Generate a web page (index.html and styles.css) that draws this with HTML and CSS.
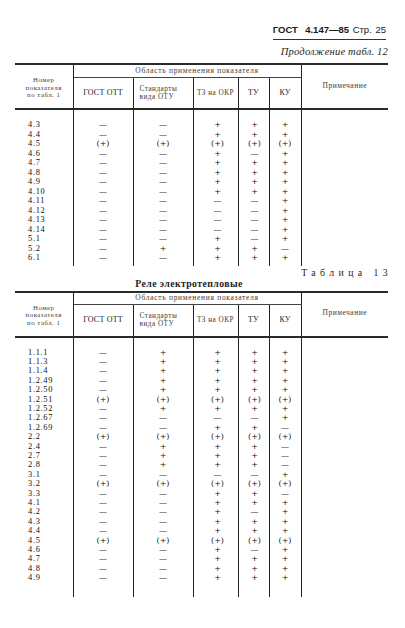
FILE: index.html
```html
<!DOCTYPE html>
<html lang="ru">
<head>
<meta charset="utf-8">
<title>ГОСТ 4.147—85 Стр. 25</title>
<link rel="stylesheet" href="styles.css">
</head>
<body>
<div class="page">
  <div class="running-head"><span class="rh-box"><b>ГОСТ</b>&nbsp; <b>4.147—85</b> Стр. 25</span></div>
  <div class="caption-italic">Продолжение табл. 12</div>

  <table class="gost-table t12">
    <colgroup><col class="c1"><col class="c2"><col class="c3"><col class="c4"><col class="c5"><col class="c6"><col class="c7"></colgroup>
    <thead>
      <tr class="h1">
        <th rowspan="2" class="num-h">Номер<br>показателя<br>по табл. 1</th>
        <th colspan="5" class="group-h">Область применения показателя</th>
        <th rowspan="2" class="note-h">Примечание</th>
      </tr>
      <tr class="h2">
        <th class="caps">ГОСТ ОТТ</th>
        <th class="left">Стандарты<br>вида ОТУ</th>
        <th>ТЗ на ОКР</th>
        <th class="caps">ТУ</th>
        <th class="caps">КУ</th>
      </tr>
    </thead>
    <tbody>
      <tr class="pad-top"><td></td><td></td><td></td><td></td><td></td><td></td><td></td></tr>
      <tr><td>4.3</td><td>—</td><td>—</td><td>+</td><td>+</td><td>+</td><td></td></tr>
      <tr><td>4.4</td><td>—</td><td>—</td><td>+</td><td>+</td><td>+</td><td></td></tr>
      <tr><td>4.5</td><td>(+)</td><td>(+)</td><td>(+)</td><td>(+)</td><td>(+)</td><td></td></tr>
      <tr><td>4.6</td><td>—</td><td>—</td><td>+</td><td>—</td><td>+</td><td></td></tr>
      <tr><td>4.7</td><td>—</td><td>—</td><td>+</td><td>+</td><td>+</td><td></td></tr>
      <tr><td>4.8</td><td>—</td><td>—</td><td>+</td><td>+</td><td>+</td><td></td></tr>
      <tr><td>4.9</td><td>—</td><td>—</td><td>+</td><td>+</td><td>+</td><td></td></tr>
      <tr><td>4.10</td><td>—</td><td>—</td><td>+</td><td>+</td><td>+</td><td></td></tr>
      <tr><td>4.11</td><td>—</td><td>—</td><td>—</td><td>—</td><td>+</td><td></td></tr>
      <tr><td>4.12</td><td>—</td><td>—</td><td>—</td><td>—</td><td>+</td><td></td></tr>
      <tr><td>4.13</td><td>—</td><td>—</td><td>—</td><td>—</td><td>+</td><td></td></tr>
      <tr><td>4.14</td><td>—</td><td>—</td><td>—</td><td>—</td><td>+</td><td></td></tr>
      <tr><td>5.1</td><td>—</td><td>—</td><td>+</td><td>—</td><td>+</td><td></td></tr>
      <tr><td>5.2</td><td>—</td><td>+</td><td>+</td><td>+</td><td>—</td><td></td></tr>
      <tr><td>6.1</td><td>—</td><td>—</td><td>+</td><td>+</td><td>+</td><td></td></tr>
      <tr class="pad-bottom"><td></td><td></td><td></td><td></td><td></td><td></td><td></td></tr>
    </tbody>
  </table>

  <div class="table-label">Таблица 13</div>
  <div class="table-title">Реле электротепловые</div>

  <table class="gost-table t13">
    <colgroup><col class="c1"><col class="c2"><col class="c3"><col class="c4"><col class="c5"><col class="c6"><col class="c7"></colgroup>
    <thead>
      <tr class="h1">
        <th rowspan="2" class="num-h">Номер<br>показателя<br>по табл. 1</th>
        <th colspan="5" class="group-h">Область применения показателя</th>
        <th rowspan="2" class="note-h">Примечание</th>
      </tr>
      <tr class="h2">
        <th class="caps">ГОСТ ОТТ</th>
        <th class="left">Стандарты<br>вида ОТУ</th>
        <th>ТЗ на ОКР</th>
        <th class="caps">ТУ</th>
        <th class="caps">КУ</th>
      </tr>
    </thead>
    <tbody>
      <tr class="pad-top"><td></td><td></td><td></td><td></td><td></td><td></td><td></td></tr>
      <tr><td>1.1.1</td><td>—</td><td>+</td><td>+</td><td>+</td><td>+</td><td></td></tr>
      <tr><td>1.1.3</td><td>—</td><td>+</td><td>+</td><td>+</td><td>+</td><td></td></tr>
      <tr><td>1.1.4</td><td>—</td><td>+</td><td>+</td><td>+</td><td>+</td><td></td></tr>
      <tr><td>1.2.49</td><td>—</td><td>+</td><td>+</td><td>+</td><td>+</td><td></td></tr>
      <tr><td>1.2.50</td><td>—</td><td>+</td><td>+</td><td>+</td><td>+</td><td></td></tr>
      <tr><td>1.2.51</td><td>(+)</td><td>(+)</td><td>(+)</td><td>(+)</td><td>(+)</td><td></td></tr>
      <tr><td>1.2.52</td><td>—</td><td>+</td><td>+</td><td>+</td><td>+</td><td></td></tr>
      <tr><td>1.2.67</td><td>—</td><td>—</td><td>—</td><td>—</td><td>+</td><td></td></tr>
      <tr><td>1.2.69</td><td>—</td><td>—</td><td>+</td><td>+</td><td>—</td><td></td></tr>
      <tr><td>2.2</td><td>(+)</td><td>(+)</td><td>(+)</td><td>(+)</td><td>(+)</td><td></td></tr>
      <tr><td>2.4</td><td>—</td><td>+</td><td>+</td><td>+</td><td>—</td><td></td></tr>
      <tr><td>2.7</td><td>—</td><td>+</td><td>+</td><td>+</td><td>—</td><td></td></tr>
      <tr><td>2.8</td><td>—</td><td>+</td><td>+</td><td>+</td><td>—</td><td></td></tr>
      <tr><td>3.1</td><td>—</td><td>—</td><td>—</td><td>—</td><td>+</td><td></td></tr>
      <tr><td>3.2</td><td>(+)</td><td>(+)</td><td>(+)</td><td>(+)</td><td>(+)</td><td></td></tr>
      <tr><td>3.3</td><td>—</td><td>—</td><td>+</td><td>+</td><td>—</td><td></td></tr>
      <tr><td>4.1</td><td>—</td><td>—</td><td>+</td><td>+</td><td>+</td><td></td></tr>
      <tr><td>4.2</td><td>—</td><td>—</td><td>+</td><td>—</td><td>+</td><td></td></tr>
      <tr><td>4.3</td><td>—</td><td>—</td><td>+</td><td>+</td><td>+</td><td></td></tr>
      <tr><td>4.4</td><td>—</td><td>—</td><td>+</td><td>+</td><td>+</td><td></td></tr>
      <tr><td>4.5</td><td>(+)</td><td>(+)</td><td>(+)</td><td>(+)</td><td>(+)</td><td></td></tr>
      <tr><td>4.6</td><td>—</td><td>—</td><td>+</td><td>—</td><td>+</td><td></td></tr>
      <tr><td>4.7</td><td>—</td><td>—</td><td>+</td><td>+</td><td>+</td><td></td></tr>
      <tr><td>4.8</td><td>—</td><td>—</td><td>+</td><td>+</td><td>+</td><td></td></tr>
      <tr><td>4.9</td><td>—</td><td>—</td><td>+</td><td>+</td><td>+</td><td></td></tr>
      <tr class="pad-bottom"><td></td><td></td><td></td><td></td><td></td><td></td><td></td></tr>
    </tbody>
  </table>
</div>
</body>
</html>
```

FILE: styles.css
```css
html, body {
  margin: 0;
  padding: 0;
  background: #ffffff;
}

body {
  color: #1e1e1e;
  font-family: "Liberation Serif", "Times New Roman", serif;
}

.page {
  width: 405px;
  height: 628px;
  box-sizing: border-box;
  padding: 24px 17px 0 15px;
  overflow: hidden;
}

.running-head {
  display: flex;
  justify-content: flex-end;
  padding-right: 2px;
}

.rh-box {
  display: inline-block;
  font-family: "Liberation Sans", Arial, sans-serif;
  font-size: 9.5px;
  line-height: 12px;
  padding: 0 0 3px 0;
  border-bottom: 1px solid #333;
  color: #1a1a1a;
  word-spacing: 1px;
}

.rh-box b {
  font-weight: 700;
}

.caption-italic {
  margin-top: 6px;
  text-align: right;
  font-style: italic;
  font-size: 10.5px;
  line-height: 12px;
  letter-spacing: 0.2px;
}

.gost-table {
  width: 373px;
  table-layout: fixed;
  border-collapse: collapse;
  margin-top: 5px;
}

.gost-table col.c1 { width: 58px; }
.gost-table col.c2 { width: 60px; }
.gost-table col.c3 { width: 60px; }
.gost-table col.c4 { width: 45px; }
.gost-table col.c5 { width: 31px; }
.gost-table col.c6 { width: 32px; }
.gost-table col.c7 { width: 87px; }

.gost-table thead {
  border-top: 2px solid #2a2a2a;
  border-bottom: 2px solid #2a2a2a;
}

.gost-table th {
  font-weight: normal;
  font-size: 7.2px;
  line-height: 8px;
  color: #3a3a3a;
  padding: 0;
  text-align: center;
  vertical-align: middle;
  letter-spacing: 0.5px;
}

.gost-table tr.h1 { height: 13px; }
.gost-table tr.h2 { height: 32px; }

.gost-table th.num-h {
  border-right: 1px solid #222;
  font-size: 6.8px;
  line-height: 7.6px;
  padding-top: 2px;
}

.gost-table th.group-h {
  border-bottom: 1px solid #444;
  padding-left: 20px;
  font-size: 7.5px;
  letter-spacing: 0.7px;
}

.gost-table th.note-h {
  border-left: 1px solid #222;
  padding-bottom: 2px;
  font-size: 7.5px;
}

.gost-table .h2 th {
  border-left: 1px solid #222;
}

.gost-table .h2 th.caps {
  font-size: 8px;
  color: #222;
  letter-spacing: 0.2px;
}

.gost-table .h2 th.left {
  text-align: left;
  padding-left: 6px;
}

.gost-table td {
  padding: 0;
  height: 9.5px;
  line-height: 9.5px;
  font-family: "DejaVu Serif", "Liberation Serif", serif;
  font-size: 8px;
  text-align: center;
  vertical-align: middle;
  border-left: 1px solid #222;
  white-space: nowrap;
  color: #111;
}

.gost-table td:first-child {
  border-left: none;
  text-align: left;
  padding-left: 13px;
  font-family: "Liberation Serif", "Times New Roman", serif;
  font-size: 8.4px;
  letter-spacing: 0.7px;
  color: #111;
}

.gost-table td:nth-child(4) { padding-left: 4px; }
.gost-table td:nth-child(5) { padding-left: 2px; }

.gost-table tr.pad-top td { height: 10px; line-height: 10px; }
.gost-table tr.pad-bottom td { height: 3px; line-height: 3px; }

.t13 {
  margin-top: 2px;
}

.t13 td {
  height: 9.4px;
  line-height: 9.4px;
}

.t13 tr.pad-top td { height: 10px; line-height: 10px; }
.t13 tr.pad-bottom td { height: 14px; line-height: 14px; }

.table-label {
  margin-top: 1px;
  text-align: right;
  font-size: 9.8px;
  line-height: 11px;
  letter-spacing: 4.4px;
  margin-right: -4px;
}

.table-title {
  text-align: center;
  font-weight: 700;
  font-size: 9.8px;
  line-height: 11px;
  letter-spacing: 0.4px;
  padding-right: 25px;
}
```
